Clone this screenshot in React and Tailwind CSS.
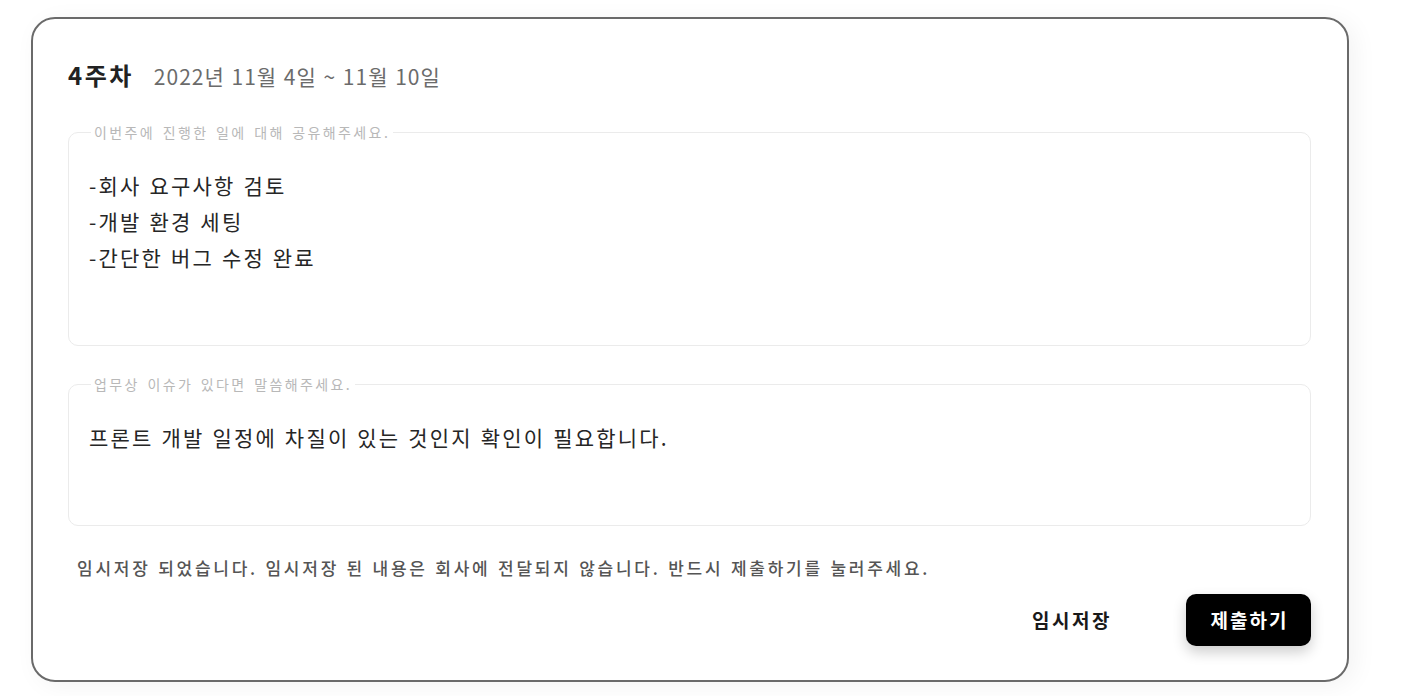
const font = { fontFamily: '"Noto Sans CJK KR", "Noto Sans", sans-serif' }

const Field = ({ label, lines, height }) => (
  <fieldset className="rounded-[10px] border border-[#ebebeb] px-[20px]">
    <legend className="ml-[2px] px-[3px] text-[14px] leading-[16px] tracking-[2.4px] [word-spacing:2px] text-[#b8b8b8]">
      {label}
    </legend>
    <div className={`${height} pt-[27px]`}>
      {lines.map((line) => (
        <p key={line} className="text-[21px] leading-[36px] tracking-[2.2px] [word-spacing:1px] text-[#262626]">
          {line}
        </p>
      ))}
    </div>
  </fieldset>
)

export default function App() {
  return (
    <div className="min-h-screen bg-white pl-[31px] pt-[17px]" style={font}>
      <div className="flex h-[665px] w-[1318px] flex-col rounded-[24px] border-2 border-[#6a6a6a] bg-white pl-[35px] pr-[36px] pt-[41px] shadow-[6px_4px_24px_rgba(0,0,0,0.05)]">
        {/* 주차 헤더 */}
        <div className="flex items-baseline gap-[20px] leading-[30px]">
          <span className="text-[24px] font-bold tracking-[2.5px] text-[#222]">4주차</span>
          <span className="text-[21px] tracking-[1px] [word-spacing:1px] text-[#6b6b6b]">2022년 11월 4일 ~ 11월 10일</span>
        </div>

        <div className="mt-[33px]">
          <Field
            label="이번주에 진행한 일에 대해 공유해주세요."
            lines={['-회사 요구사항 검토', '-개발 환경 세팅', '-간단한 버그 수정 완료']}
            height="h-[205px]"
          />
        </div>
        <div className="mt-[30px]">
          <Field
            label="업무상 이슈가 있다면 말씀해주세요."
            lines={['프론트 개발 일정에 차질이 있는 것인지 확인이 필요합니다.']}
            height="h-[133px]"
          />
        </div>

        <p className="ml-[9px] mt-[30px] text-[17px] font-medium leading-[24px] tracking-[2.75px] [word-spacing:1px] text-[#555]">
          임시저장 되었습니다. 임시저장 된 내용은 회사에 전달되지 않습니다. 반드시 제출하기를 눌러주세요.
        </p>

        <div className="mt-[14px] flex items-center justify-end">
          <button className="mr-[74px] text-[19px] font-bold tracking-[2.5px] text-[#1a1a1a]">임시저장</button>
          <button className="flex h-[52px] w-[125px] items-center justify-center rounded-[10px] bg-black pl-[2px] text-[19px] font-bold tracking-[2px] text-white shadow-[0_6px_14px_rgba(0,0,0,0.2)]">
            제출하기
          </button>
        </div>
      </div>
    </div>
  )
}
